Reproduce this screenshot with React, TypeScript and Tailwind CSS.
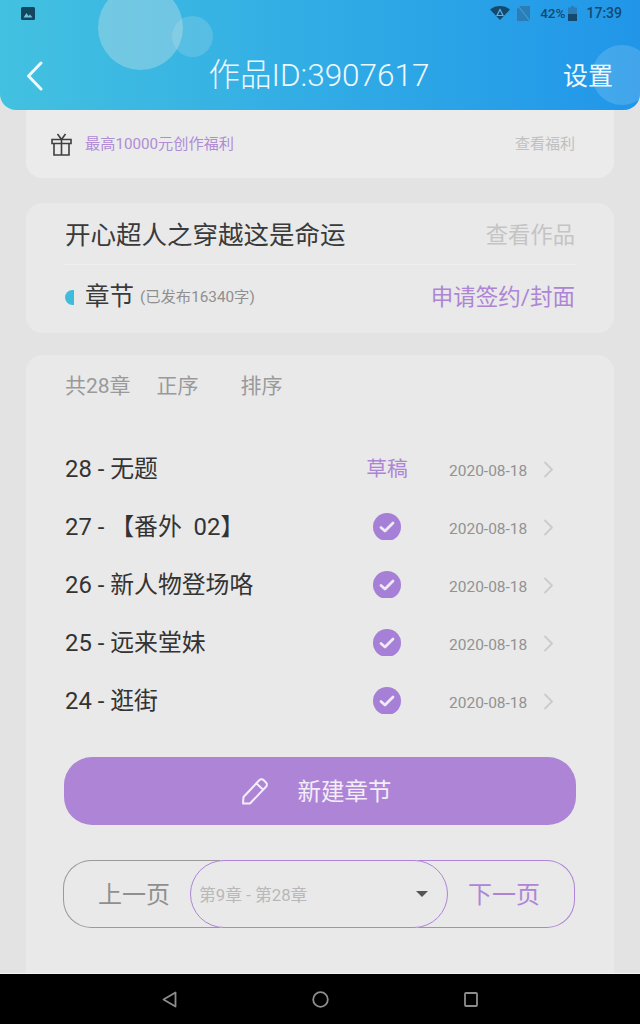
import React from 'react';

const chapters = [
  { title: '28 - 无题', draft: true },
  { title: '27 - 【番外  02】', draft: false },
  { title: '26 - 新人物登场咯', draft: false },
  { title: '25 - 远来堂妹', draft: false },
  { title: '24 - 逛街', draft: false },
];

const StatusBar: React.FC = () => (
  <div className="relative z-10 flex h-[26px] items-center pl-[21px] pr-[18px] text-[#14496f]">
    <svg width="14" height="13" viewBox="0 0 14 13">
      <rect width="14" height="13" rx="1.5" fill="#11475f" />
      <path d="M2.5 10.5 5.5 6l2 3 1.5-1.5 2.5 3z" fill="#6fc3d8" />
    </svg>
    <div className="ml-auto flex items-center">
      <svg width="20" height="14" viewBox="0 0 20 14">
        <path d="M0 3.5C3 1 6.300 0 10 0s7 1 10 3.500L10 14z" fill="#14496f" />
        <path d="M10 3.500 13 9.500H7z" fill="none" stroke="#5db3e6" strokeWidth="1.200" />
      </svg>
      <svg className="ml-[7px]" width="13" height="15" viewBox="0 0 13 15">
        <path d="M3 0h10v15H0V3z" fill="#2c7db5" />
        <path d="M1 0l12 15" stroke="#2fa0e2" strokeWidth="1.200" />
      </svg>
      <span className="ml-[10px] text-[13.500px] font-medium">42%</span>
      <svg className="ml-[3px]" width="9" height="15" viewBox="0 0 9 15">
        <path d="M3 0h3v1.500h3V15H0V1.500h3z" fill="#2c7db5" />
        <rect y="8" width="9" height="7" fill="#14496f" />
      </svg>
      <span className="ml-[9px] text-[14px] font-medium">17:39</span>
    </div>
  </div>
);

const Header: React.FC = () => (
  <header className="relative z-10 h-[110px] shrink-0 overflow-hidden rounded-b-[16px] bg-gradient-to-r from-[#43c1e0] to-[#2196e9]">
    <div className="absolute left-[98px] top-[-15px] h-[85px] w-[85px] rounded-full bg-[#d8e4e4]/35" />
    <div className="absolute left-[172px] top-[16px] h-[41px] w-[41px] rounded-full bg-[#d8e4e4]/20" />
    <div className="absolute left-[592px] top-[45px] h-[60px] w-[60px] rounded-full bg-white/15" />
    <StatusBar />
    <div className="relative mt-[24px] flex h-[52px] items-center justify-between pl-[26px] pr-[27px] text-[#eef9fd]">
      <div className="w-[49px]">
        <svg width="17" height="30" viewBox="0 0 17 30" fill="none" stroke="currentColor" strokeWidth="3" strokeLinecap="round" strokeLinejoin="round">
          <path d="M15 2 2.500 15 15 28" />
        </svg>
      </div>
      <h1 className="text-[31.500px] font-light leading-none">作品ID:3907617</h1>
      <span className="text-[25px] leading-none">设置</span>
    </div>
  </header>
);

const Benefit: React.FC = () => (
  <section className="flex h-[68px] items-center rounded-b-[16px] bg-[#ebebeb] pl-[25px] pr-[39px]">
    <svg width="21" height="23" viewBox="0 0 21 23" fill="none" stroke="#3f3f3f" strokeWidth="1.600">
      <path d="M1 6.500h19v4H1zM3 10.500V22h15V10.500M10.500 6.500V22M6.500 1l4 5.500 4-5.500" />
    </svg>
    <span className="ml-[13px] text-[15.200px] text-[#b08cd6]">最高10000元创作福利</span>
    <span className="ml-auto text-[15px] text-[#c0c0c0]">查看福利</span>
  </section>
);

const Summary: React.FC = () => (
  <section className="mt-[25px] h-[130px] rounded-[16px] bg-[#e9e9e9] px-[39px]">
    <div className="flex h-[62px] items-center justify-between border-b border-[#efefef] pt-[4px]">
      <span className="text-[25.500px] leading-none text-[#3a3a3a]">开心超人之穿越这是命运</span>
      <span className="text-[22.300px] leading-none text-[#c4c4c4]">查看作品</span>
    </div>
    <div className="flex h-[62px] items-center pt-[3px]">
      <span className="h-[15px] w-[9px] rounded-l-[8px] bg-[#3fbcdc]" />
      <span className="ml-[11px] text-[24.500px] leading-none text-[#3a3a3a]">章节</span>
      <span className="ml-[6px] text-[15.300px] leading-none text-[#8f8f8f]">(已发布16340字)</span>
      <span className="ml-auto text-[22.500px] leading-none text-[#ae85d6]">申请签约/封面</span>
    </div>
  </section>
);

const CheckBadge: React.FC = () => (
  <div className="-mt-px h-[27px] w-[28px] overflow-hidden">
    <div className="flex h-[28px] w-[28px] items-center justify-center rounded-full bg-[#a67fd6]">
      <svg width="16" height="12" viewBox="0 0 16 12" fill="none" stroke="#f0e9f8" strokeWidth="2.800" strokeLinecap="round" strokeLinejoin="round">
        <path d="M2 6.500 6 10l8-8" />
      </svg>
    </div>
  </div>
);

const ChapterRow: React.FC<{ title: string; draft: boolean }> = ({ title, draft }) => (
  <div className="flex h-[58px] items-center">
    <span className="w-[290px] whitespace-pre pt-[2px] text-[23.850px] leading-none text-[#333]">{title}</span>
    <div className="flex w-[64px] justify-center">
      {draft ? <span className="text-[20.800px] leading-none text-[#ae85d6]">草稿</span> : <CheckBadge />}
    </div>
    <span className="ml-[30px] pt-[5px] text-[15.500px] leading-none text-[#929292]">2020-08-18</span>
    <svg className="ml-[16px] mt-[1px]" width="11" height="17" viewBox="0 0 11 17" fill="none" stroke="#cbcbcb" strokeWidth="1.800" strokeLinecap="round" strokeLinejoin="round">
      <path d="M2 1.500 9 8.500 2 15.500" />
    </svg>
  </div>
);

const Pagination: React.FC = () => (
  <div className="-ml-[2px] mt-[35px] flex h-[68px] w-[512px]">
    <button className="h-full w-[157px] rounded-l-[28px] border border-r-0 border-[#9a9a9a] pl-[34px] pt-[2px] text-left text-[24px] leading-none text-[#8f8f8f]">
      上一页
    </button>
    <div className="relative z-10 -mx-[30px] flex h-full w-[258px] shrink-0 items-center rounded-[34px] border border-[#ae85d6] bg-[#e9e9e9] pl-[8px] pr-[19px]">
      <span className="pt-[2px] text-[16.800px] leading-none text-[#b8b8b8]">第9章 - 第28章</span>
      <span className="ml-auto h-0 w-0 border-x-[6px] border-t-[6px] border-x-transparent border-t-[#555]" />
    </div>
    <button className="h-full w-[157px] rounded-r-[28px] border border-l-0 border-[#ae85d6] pl-[50px] pt-[2px] text-left text-[24px] leading-none text-[#ae85d6]">
      下一页
    </button>
  </div>
);

const ChapterList: React.FC = () => (
  <section className="mt-[22px] min-h-0 flex-1 rounded-t-[16px] bg-[#e9e9e9] px-[39px]">
    <div className="flex h-[62px] items-center text-[21px] leading-none text-[#9a9a9a]">
      <span>共28章</span>
      <span className="ml-[26px]">正序</span>
      <span className="ml-[42px]">排序</span>
    </div>
    <div className="mt-[23px]">
      {chapters.map(chapter => (
        <ChapterRow key={chapter.title} title={chapter.title} draft={chapter.draft} />
      ))}
    </div>
    <button className="-ml-px mt-[27px] flex h-[68px] w-[512px] items-center justify-center rounded-[28px] bg-[#ae85d6] pr-[8px] text-[23.500px] leading-none text-[#f3edf9]">
      <svg width="28" height="28" viewBox="0 0 28 28" fill="none" stroke="currentColor" strokeWidth="2" strokeLinejoin="round">
        <path d="M2 26.500 2.500 20 18 3.500a3 3 0 0 1 4.500-.500l2.500 2.500a3 3 0 0 1 0 4.300L9 26.500zM15.500 6.500l7 6.500" />
      </svg>
      <span className="ml-[29px] pt-[3px]">新建章节</span>
    </button>
    <Pagination />
  </section>
);

const NavBar: React.FC = () => (
  <nav className="flex h-[51px] shrink-0 items-center justify-center border-t border-[#f4f4f4] bg-black">
    <div className="flex w-[316px] items-center justify-between">
      <svg width="15" height="17" viewBox="0 0 15 17" fill="none" stroke="#8d8d8d" strokeWidth="1.800" strokeLinejoin="round">
        <path d="M13.500 1.500v14L1.500 8.500z" />
      </svg>
      <svg width="17" height="17" viewBox="0 0 17 17" fill="none" stroke="#8d8d8d" strokeWidth="1.800">
        <circle cx="8.500" cy="8.500" r="7.300" />
      </svg>
      <svg width="14" height="15" viewBox="0 0 14 15" fill="none" stroke="#8d8d8d" strokeWidth="1.800">
        <rect x="1" y="1" width="12" height="13" rx="1" />
      </svg>
    </div>
  </nav>
);

const App: React.FC = () => (
  <div className="flex h-[1024px] w-[640px] flex-col overflow-hidden bg-[#e3e3e3] font-['Roboto','Noto_Sans_CJK_SC',sans-serif]">
    <Header />
    <main className="flex min-h-0 flex-1 flex-col px-[26px]">
      <Benefit />
      <Summary />
      <ChapterList />
    </main>
    <NavBar />
  </div>
);

export default App;
